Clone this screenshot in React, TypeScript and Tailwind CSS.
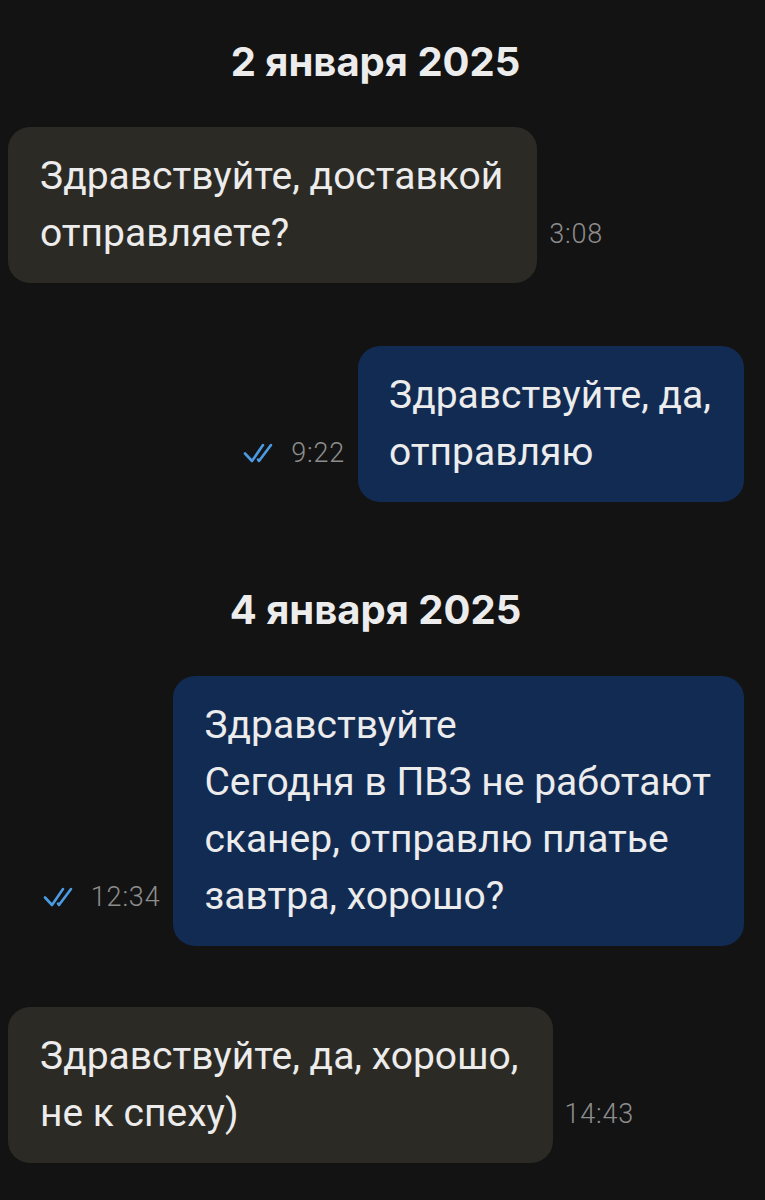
import React from 'react'

type Msg = {
  side: 'in' | 'out'
  lines: string[]
  time: string
}

const font = { fontFamily: 'Roboto, "Noto Sans", sans-serif' }

function DoubleCheck() {
  return (
    <svg width="34" height="22" viewBox="0 0 34 22" fill="none" stroke="#4a9be3" strokeWidth="2.6" strokeLinecap="round" strokeLinejoin="round">
      <path d="M2 11.5 L9 19 L20 3" />
      <path d="M15 17.5 L16 19 L28 3" />
    </svg>
  )
}

function Bubble({ msg }: { msg: Msg }) {
  const isOut = msg.side === 'out'
  const bubble = (
    <div
      className={
        isOut
          ? 'rounded-[22px] bg-[#122b53] py-[21px] pr-[33px] pl-[31px] text-[39px] leading-[57px] text-[#ececec]'
          : 'rounded-[22px] bg-[#2c2a24] py-[21px] pr-[34px] pl-[32px] text-[39px] leading-[57px] text-[#ececec]'
      }
      style={font}
    >
      {msg.lines.map((l) => (
        <div key={l}>{l}</div>
      ))}
    </div>
  )
  const time = (
    <div className="mb-[29px] flex items-center gap-[14px] text-[27px] font-light tracking-[0.8px] text-[#8d8d8d]" style={font}>
      {isOut && <DoubleCheck />}
      <span>{msg.time}</span>
    </div>
  )
  return (
    <div className={isOut ? 'flex items-end justify-end gap-[13px] pr-[21px]' : 'flex items-end justify-start gap-[12px] pl-2'}>
      {isOut ? (
        <>
          {time}
          {bubble}
        </>
      ) : (
        <>
          {bubble}
          {time}
        </>
      )}
    </div>
  )
}

function DateLabel({ text }: { text: string }) {
  return (
    <div
      className="pr-[14px] text-center text-[40px] font-bold leading-[44px] text-[#ececec]"
      style={{ fontFamily: 'Inter, Roboto, sans-serif' }}
    >
      {text}
    </div>
  )
}

export default function App() {
  return (
    <div className="min-h-screen w-[765px] bg-[#131313] pt-[40px]">
      <DateLabel text="2 января 2025" />
      <div className="mt-[43px]">
        <Bubble msg={{ side: 'in', lines: ['Здравствуйте, доставкой', 'отправляете?'], time: '3:08' }} />
      </div>
      <div className="mt-[63px]">
        <Bubble msg={{ side: 'out', lines: ['Здравствуйте, да,', 'отправляю'], time: '9:22' }} />
      </div>
      <div className="mt-[86px]">
        <DateLabel text="4 января 2025" />
      </div>
      <div className="mt-[44px]">
        <Bubble
          msg={{
            side: 'out',
            lines: ['Здравствуйте', 'Сегодня в ПВЗ не работают', 'сканер, отправлю платье', 'завтра, хорошо?'],
            time: '12:34',
          }}
        />
      </div>
      <div className="mt-[61px]">
        <Bubble msg={{ side: 'in', lines: ['Здравствуйте, да, хорошо,', 'не к спеху)'], time: '14:43' }} />
      </div>
    </div>
  )
}
